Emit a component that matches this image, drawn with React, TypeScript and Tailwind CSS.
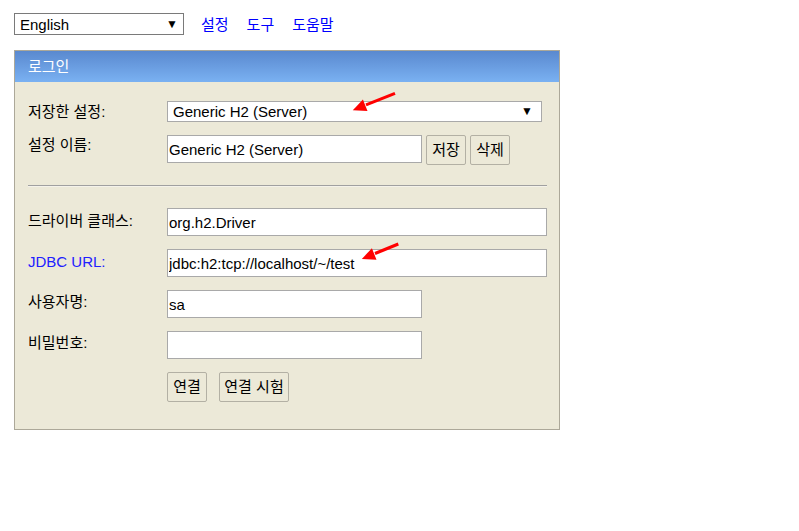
import React from "react";

const kr = "font-['Liberation_Sans','Noto_Sans_CJK_KR',sans-serif]";

function Row({ label, blue, children, center, pt = "pt-[4px]" }: { label: string; blue?: boolean; children: React.ReactNode; center?: boolean; pt?: string }) {
  return (
    <div className={`flex ${center ? "items-center" : "items-start"}`}>
      <div className={`w-[139px] shrink-0 text-[15px] leading-[17px] ${center ? "" : pt} ${blue ? "text-[#2020ff]" : "text-black"}`}>
        {label}
      </div>
      {children}
    </div>
  );
}

function TextInput({ value, w }: { value: string; w: string }) {
  return (
    <input
      readOnly
      value={value}
      className={`${w} h-[28px] border border-[#a9a9a9] bg-white pl-[1px] text-[15px] text-black outline-none ${kr}`}
    />
  );
}

function Btn({ children, w }: { children: React.ReactNode; w: string }) {
  return (
    <button className={`${w} h-[30px] rounded-[2px] border border-[#b3b0a4] bg-[#ece9d8] text-[15px] text-black ${kr}`}>
      {children}
    </button>
  );
}

export default function App() {
  return (
    <div className={`relative w-[799px] h-[531px] bg-white ${kr}`}>
      <div className="pl-[14px] pt-[13px]">
        <div className="flex h-[22px] items-center">
          <div className="flex h-[22px] w-[170px] items-center justify-between border border-[#7a7a7a] bg-white pl-[5px] pr-[5px] text-[15px] leading-[17px] text-black">
            <span>English</span>
            <span className="text-[12px]">▼</span>
          </div>
          <div className="ml-[17px] flex gap-[18px] text-[15px] leading-[17px] text-[#0000ff]">
            <span>설정</span>
            <span>도구</span>
            <span>도움말</span>
          </div>
        </div>

        <div className="mt-[15px] w-[546px] border border-[#aca899] bg-[#ece9d8]">
          <div className="flex h-[31px] items-center bg-gradient-to-b from-[#5a89cf] to-[#7ab1f2] pl-[13px] text-[15px] leading-[17px] text-white">
            로그인
          </div>
          <div className="pl-[13px] pr-[12px] pt-[19px] pb-[27px]">
            <Row label="저장한 설정:" center>
              <div className="flex h-[21px] w-[375px] items-center justify-between border border-[#a9a9a9] bg-white pl-[5px] pr-[8px] text-[15px] leading-[17px] text-black">
                <span>Generic H2 (Server)</span>
                <span className="text-[12px]">▼</span>
              </div>
            </Row>
            <div className="mt-[13px]">
              <Row label="설정 이름:" pt="pt-[1px]">
                <div className="flex items-start gap-[4px]">
                  <TextInput value="Generic H2 (Server)" w="w-[255px]" />
                  <Btn w="w-[40px]">저장</Btn>
                  <Btn w="w-[40px]">삭제</Btn>
                </div>
              </Row>
            </div>
            <div className="mt-[20px] h-[2px] border-t border-t-[#a0a0a0] border-b border-b-[#f4f2ea]" />
            <div className="mt-[21px] flex flex-col gap-[13px]">
              <Row label="드라이버 클래스:">
                <TextInput value="org.h2.Driver" w="w-[380px]" />
              </Row>
              <Row label="JDBC URL:" blue>
                <TextInput value="jdbc:h2:tcp://localhost/~/test" w="w-[380px]" />
              </Row>
              <Row label="사용자명:" pt="pt-[3px]">
                <TextInput value="sa" w="w-[255px]" />
              </Row>
              <Row label="비밀번호:" pt="pt-[3px]">
                <TextInput value="" w="w-[255px]" />
              </Row>
              <div className="flex pl-[139px] gap-[12px]">
                <Btn w="w-[40px]">연결</Btn>
                <Btn w="w-[70px]">연결 시험</Btn>
              </div>
            </div>
          </div>
        </div>
      </div>

      <svg className="pointer-events-none absolute left-0 top-0" width="799" height="531">
        <line x1="395" y1="93.3" x2="366" y2="104.8" stroke="#ff0000" strokeWidth="3" />
        <polygon points="352.8,110.2 367.5,111 362.9,99.6" fill="#ff0000" />
        <line x1="398.3" y1="244" x2="375" y2="253.5" stroke="#ff0000" strokeWidth="3" />
        <polygon points="361.8,258.9 376.5,259.7 371.9,248.3" fill="#ff0000" />
      </svg>
    </div>
  );
}
